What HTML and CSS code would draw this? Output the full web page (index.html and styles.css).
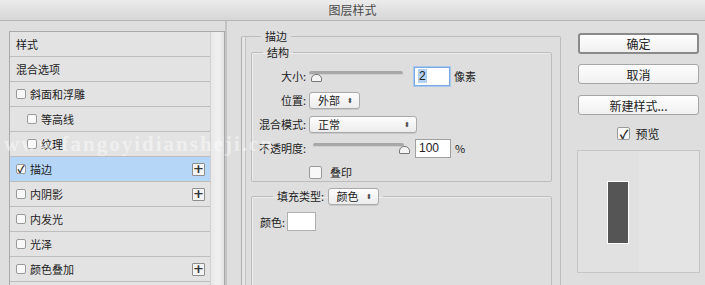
FILE: index.html
```html
<!DOCTYPE html>
<html lang="zh-CN">
<head>
    <meta charset="UTF-8">
    <title>图层样式</title>
    <link rel="stylesheet" href="styles.css">
</head>
<body>
    <div class="dialog">
        <div class="titlebar">图层样式</div>

        <div class="main">
            <div class="sidebar">
                <div class="style-list">
                    <div class="rows">
                        <div class="row">样式</div>
                        <div class="row">混合选项</div>
                        <div class="row"><span class="check"></span>斜面和浮雕</div>
                        <div class="row sub"><span class="check"></span>等高线</div>
                        <div class="row sub"><span class="check"></span>纹理</div>
                        <div class="row selected"><span class="check on">✓</span>描边<span class="plus">+</span></div>
                        <div class="row"><span class="check"></span>内阴影<span class="plus">+</span></div>
                        <div class="row"><span class="check"></span>内发光</div>
                        <div class="row"><span class="check"></span>光泽</div>
                        <div class="row"><span class="check"></span>颜色叠加<span class="plus">+</span></div>
                        <div class="row"></div>
                    </div>
                    <div class="scrollbar"></div>
                </div>
            </div>

            <div class="content">
                <fieldset class="group outer">
                    <legend>描边</legend>

                    <fieldset class="group inner">
                        <legend>结构</legend>
                        <div class="field">
                            <label>大小:</label>
                            <div class="slider"><span class="thumb"></span></div>
                            <div class="num focus"><span class="sel">2</span></div>
                            <span class="unit">像素</span>
                        </div>
                        <div class="field">
                            <label>位置:</label>
                            <div class="select short">外部<span class="arrows">⬍</span></div>
                        </div>
                        <div class="field">
                            <label>混合模式:</label>
                            <div class="select wide">正常<span class="arrows">⬍</span></div>
                        </div>
                        <div class="field">
                            <label>不透明度:</label>
                            <div class="slider opacity"><span class="thumb"></span></div>
                            <div class="num">100</div>
                            <span class="unit">%</span>
                        </div>
                        <div class="field">
                            <label></label>
                            <span class="check big"></span>
                            <span class="text">叠印</span>
                        </div>
                    </fieldset>

                    <fieldset class="group fill">
                        <legend>填充类型: <span class="select short">颜色<span class="arrows">⬍</span></span></legend>
                        <div class="color-row">
                            <span>颜色:</span>
                            <span class="swatch"></span>
                        </div>
                    </fieldset>
                </fieldset>
            </div>

            <div class="actions">
                <button class="btn default">确定</button>
                <button class="btn">取消</button>
                <button class="btn">新建样式...</button>
                <div class="preview-check"><span class="check big on">✓</span>预览</div>
                <div class="preview">
                    <div class="sample"></div>
                </div>
            </div>
        </div>

        <div class="watermark">www.fangoyidiansheji.cn</div>
    </div>
</body>
</html>
```

FILE: styles.css
```css
* {
    box-sizing: border-box;
    margin: 0;
    padding: 0;
}

body {
    font-family: "Noto Sans CJK SC", "Noto Sans", sans-serif;
    font-size: 11px;
    color: #222;
    background: #dedede;
    width: 705px;
    height: 285px;
    overflow: hidden;
}

.dialog {
    position: relative;
    height: 285px;
}

.titlebar {
    height: 21px;
    line-height: 20px;
    text-align: center;
    font-size: 12px;
    color: #4a4a4a;
    background: linear-gradient(#ececec, #d6d6d6);
    border-bottom: 1px solid #b4b4b4;
}

.main {
    display: flex;
    height: 264px;
}

/* left list */
.sidebar {
    padding: 10px 0 0 9px;
    width: 227px;
    border-right: 2px solid #c4c4c4;
}

.style-list {
    display: flex;
    border: 1px solid #a9a9a9;
    border-bottom: none;
    height: 100%;
    background: #e2e2e2;
}

.rows {
    width: 200px;
}

.row {
    display: flex;
    align-items: center;
    height: 25px;
    padding-left: 6px;
    border-bottom: 1px solid #bdbdbd;
    background: #e3e3e3;
}

.row.sub {
    padding-left: 17px;
}

.row.selected {
    background: #b6d6f8;
}

.scrollbar {
    width: 14px;
    background: linear-gradient(90deg, #e9e9e9, #f1f1f1 60%, #e4e4e4);
    border-left: 1px solid #d0d0d0;
}

.check {
    display: inline-flex;
    align-items: center;
    justify-content: center;
    width: 10px;
    height: 10px;
    margin-right: 4px;
    border: 1px solid #9a9a9a;
    border-radius: 2px;
    background: #f8f8f8;
    font-size: 10px;
    line-height: 1;
    color: #222;
    font-weight: bold;
}

.check.big {
    width: 13px;
    height: 13px;
    font-size: 12px;
}

.plus {
    margin-left: auto;
    margin-right: 5px;
    width: 13px;
    height: 13px;
    border: 1px solid #8e8e8e;
    border-radius: 1px;
    background: #f4f4f4;
    font-family: "DejaVu Sans", sans-serif;
    font-weight: bold;
    font-size: 13px;
    line-height: 10px;
    text-align: center;
    color: #333;
}

/* middle panel */
.content {
    padding: 7px 0 0 14px;
    width: 334px;
}

.group {
    border: 1px solid #bdbdbd;
    border-radius: 2px;
    box-shadow: inset 1px 1px 0 #ececec;
}

.group legend {
    margin-left: 10px;
    padding: 0 4px;
    line-height: 16px;
}

.outer {
    height: 300px;
    padding: 0 8px 0 9px;
    border-left-color: #b0b0b0;
    box-shadow: inset 3px 0 0 #e6e6e6, inset 4px 0 0 #c4c4c4;
}

.inner {
    height: 138px;
    padding: 4px 0 0 0;
}

.inner legend {
    margin-left: 11px;
}

.field {
    display: flex;
    align-items: center;
    height: 24px;
}

.field label {
    width: 57px;
    text-align: right;
    padding-right: 3px;
}

.slider {
    position: relative;
    width: 94px;
    height: 4px;
    margin-top: -6px;
    background: #a8a8a8;
    border-radius: 2px;
    border-bottom: 1px solid #d0d0d0;
}

.slider.opacity {
    margin-left: 4px;
    width: 91px;
}

.thumb {
    position: absolute;
    left: 2px;
    top: 3px;
    width: 11px;
    height: 8px;
    background: #f4f4f4;
    border: 1px solid #777;
    border-radius: 5px 5px 1px 1px;
}

.opacity .thumb {
    left: auto;
    right: -6px;
}

.num {
    margin-left: 11px;
    width: 36px;
    height: 19px;
    border: 1px solid #a0a0a0;
    background: #fff;
    font-family: "Liberation Sans", sans-serif;
    font-size: 12px;
    line-height: 17px;
    padding-left: 3px;
}

.num.focus {
    border-color: #7ba9e4;
    box-shadow: 0 0 0 1px #a9c8ef;
}

.sel {
    background: #b3d1f5;
    padding: 0 1px;
}

.unit {
    margin-left: 4px;
}

.select {
    display: inline-flex;
    align-items: center;
    height: 17px;
    padding: 0 6px 0 8px;
    border: 1px solid #aaa;
    border-radius: 3px;
    background: linear-gradient(#fdfdfd, #ececec);
    box-shadow: 0 1px 0 #c8c8c8;
    line-height: 15px;
}

.select.short {
    width: 51px;
}

.select.wide {
    width: 108px;
}

.arrows {
    margin-left: auto;
    font-size: 7px;
    color: #444;
}

.text {
    margin-left: 4px;
}

.fill {
    margin-top: 5px;
    height: 120px;
    padding: 6px 0 0 8px;
}

.fill legend {
    margin-left: 13px;
    padding: 0 4px 0 4px;
    line-height: 19px;
}

.fill legend .select {
    margin-left: 1px;
}

.color-row {
    display: flex;
    align-items: center;
    gap: 2px;
}

.swatch {
    width: 29px;
    height: 19px;
    background: #fff;
    border: 1px solid #b0b0b0;
}

/* right column */
.actions {
    display: flex;
    flex-direction: column;
    align-items: center;
    padding: 12px 0 0 16px;
    width: 139px;
}

.btn {
    width: 121px;
    height: 20px;
    margin-bottom: 11px;
    font-family: "Noto Sans CJK SC", sans-serif;
    font-size: 12px;
    color: #222;
    border: 1px solid #a6a6a6;
    border-radius: 3px;
    background: linear-gradient(#fefefe, #f0f0f0);
    line-height: 17px;
}

.btn.default {
    height: 21px;
    margin-bottom: 10px;
    border: 2px solid #8a8a8a;
}

.preview-check {
    display: flex;
    align-items: center;
    margin-top: -1px;
    font-size: 12px;
}

.preview-check .check {
    margin-right: 5px;
}

.preview {
    margin-top: 8px;
    width: 123px;
    height: 123px;
    border: 1px solid #c6c6c6;
    background: linear-gradient(90deg, #e1e1e1 50%, #e4e4e4 50%);
    padding: 30px 0 0 29px;
}

.sample {
    width: 22px;
    height: 63px;
    background: #555;
    border: 1px solid #fff;
}

.watermark {
    position: absolute;
    left: 4px;
    top: 132px;
    font-family: "Liberation Serif", serif;
    font-weight: bold;
    font-size: 21px;
    letter-spacing: 2px;
    color: rgba(255, 255, 255, 0.45);
    pointer-events: none;
}
```
